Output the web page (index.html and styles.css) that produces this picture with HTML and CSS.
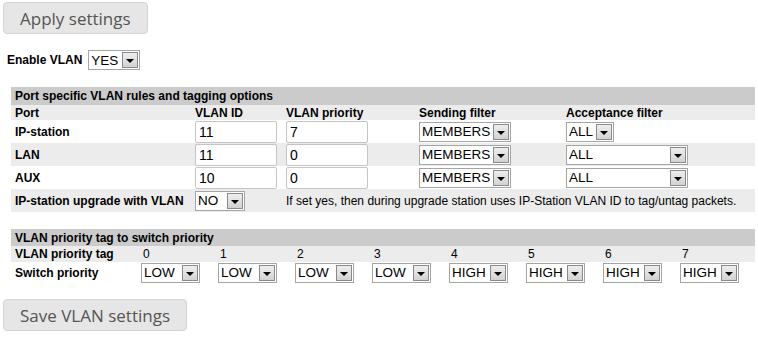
FILE: index.html
```html
<!DOCTYPE html>
<html lang="en">
<head>
    <meta charset="UTF-8">
    <title>VLAN settings</title>
    <link rel="stylesheet" href="styles.css">
</head>
<body>
    <p class="note">Note: the new values apply only after you press the Apply settings button below.</p>
    <button class="btn">Apply settings</button>

    <div class="enable">
        <label>Enable VLAN</label>
        <span class="sel w-yes"><select><option>YES</option><option>NO</option></select></span>
    </div>

    <table class="grid ports">
        <colgroup>
            <col style="width:180px"><col style="width:91px"><col style="width:133px"><col style="width:147px"><col style="width:193px">
        </colgroup>
        <tr class="head"><th colspan="5">Port specific VLAN rules and tagging options</th></tr>
        <tr class="alt sub">
            <th>Port</th><th>VLAN ID</th><th>VLAN priority</th><th>Sending filter</th><th>Acceptance filter</th>
        </tr>
        <tr>
            <th>IP-station</th>
            <td><input type="text" value="11"></td>
            <td><input type="text" value="7"></td>
            <td><span class="sel w-mem"><select><option>MEMBERS</option></select></span></td>
            <td><span class="sel w-all"><select><option>ALL</option></select></span></td>
        </tr>
        <tr class="alt">
            <th>LAN</th>
            <td><input type="text" value="11"></td>
            <td><input type="text" value="0"></td>
            <td><span class="sel w-mem"><select><option>MEMBERS</option></select></span></td>
            <td><span class="sel w-wide"><select><option>ALL</option></select></span></td>
        </tr>
        <tr>
            <th>AUX</th>
            <td><input type="text" value="10"></td>
            <td><input type="text" value="0"></td>
            <td><span class="sel w-mem"><select><option>MEMBERS</option></select></span></td>
            <td><span class="sel w-wide"><select><option>ALL</option></select></span></td>
        </tr>
        <tr class="alt">
            <th>IP-station upgrade with VLAN</th>
            <td><span class="sel w-no"><select><option>NO</option><option>YES</option></select></span></td>
            <td colspan="3" class="hint">If set yes, then during upgrade station uses IP-Station VLAN ID to tag/untag packets.</td>
        </tr>
    </table>

    <table class="grid prio">
        <colgroup>
            <col style="width:128px">
            <col style="width:77px"><col style="width:77px"><col style="width:77px"><col style="width:77px">
            <col style="width:77px"><col style="width:77px"><col style="width:77px"><col style="width:77px">
        </colgroup>
        <tr class="head"><th colspan="9">VLAN priority tag to switch priority</th></tr>
        <tr class="alt tags">
            <th>VLAN priority tag</th>
            <td>0</td><td>1</td><td>2</td><td>3</td><td>4</td><td>5</td><td>6</td><td>7</td>
        </tr>
        <tr class="switch">
            <th>Switch priority</th>
            <td><span class="sel w-pri"><select><option>LOW</option><option>HIGH</option></select></span></td>
            <td><span class="sel w-pri"><select><option>LOW</option><option>HIGH</option></select></span></td>
            <td><span class="sel w-pri"><select><option>LOW</option><option>HIGH</option></select></span></td>
            <td><span class="sel w-pri"><select><option>LOW</option><option>HIGH</option></select></span></td>
            <td><span class="sel w-pri"><select><option>HIGH</option><option>LOW</option></select></span></td>
            <td><span class="sel w-pri"><select><option>HIGH</option><option>LOW</option></select></span></td>
            <td><span class="sel w-pri"><select><option>HIGH</option><option>LOW</option></select></span></td>
            <td><span class="sel w-pri"><select><option>HIGH</option><option>LOW</option></select></span></td>
        </tr>
    </table>

    <button class="btn">Save VLAN settings</button>
</body>
</html>
```

FILE: styles.css
```css
body {
    margin: 0;
    font-family: "Liberation Sans", Arial, sans-serif;
    font-size: 12px;
    color: #000;
    background: #fff;
    overflow: hidden;
}

.note {
    margin: -16px 0 0 8px;
    font-size: 13px;
    line-height: 14px;
}

.btn {
    display: block;
    height: 32px;
    margin: 4px 0 0 3px;
    padding: 0 16px;
    font-family: "Open Sans", sans-serif;
    font-size: 17px;
    color: #555;
    background: #e6e6e6;
    border: 1px solid #d4d4d4;
    border-radius: 4px;
}

.enable {
    display: flex;
    align-items: center;
    gap: 6px;
    height: 20px;
    margin: 16px 0 0 7px;
}
.enable label {
    font-weight: bold;
}

/* tables */
.grid {
    width: 744px;
    margin: 17px 0 0 11px;
    border-collapse: collapse;
    table-layout: fixed;
}
.grid th,
.grid td {
    padding: 0 0 0 4px;
    text-align: left;
    white-space: nowrap;
    vertical-align: middle;
    line-height: 14px;
}
.grid th {
    font-weight: bold;
}
.grid .head th {
    height: 18px;
    background: #cbcbcb;
    font-size: 12px;
}
.grid .alt {
    background: #ececec;
}
.ports tr {
    height: 23px;
}
.ports tr.head {
    height: 18px;
}
.ports tr.sub {
    height: 15px;
}
.ports .sub th {
    height: 15px;
}
.ports .hint {
    font-weight: normal;
}

.prio {
    margin-top: 17px;
}
.prio tr.head th {
    height: 17px;
}
.prio .tags th,
.prio .tags td {
    height: 16px;
}
.prio td {
    padding-left: 2px;
}
.prio .tags td {
    padding-left: 4px;
}
.prio .switch th,
.prio .switch td {
    height: 21px;
}

.prio + .btn {
    margin-top: 16px;
}

/* inputs */
input[type="text"] {
    box-sizing: border-box;
    display: block;
    width: 82px;
    height: 22px;
    margin: 0;
    padding: 0 3px;
    font-family: "Liberation Sans", Arial, sans-serif;
    font-size: 14px;
    color: #000;
    border: 1px solid #c4c4c4;
    border-radius: 2px;
}

/* classic looking select with a small arrow button */
.sel {
    position: relative;
    display: block;
    box-sizing: border-box;
    height: 20px;
    border: 1px solid #a5a5a5;
    background: #fff;
}
.enable .sel {
    display: inline-block;
}
.sel select {
    -webkit-appearance: none;
    appearance: none;
    display: block;
    box-sizing: border-box;
    width: 100%;
    height: 18px;
    margin: 0;
    padding: 0 18px 0 2px;
    border: 0;
    background: transparent;
    font-family: "Liberation Sans", Arial, sans-serif;
    font-size: 13.5px;
    color: #000;
    outline: none;
}
.sel::after {
    content: "";
    position: absolute;
    top: 1px;
    right: 1px;
    width: 14px;
    height: 14px;
    border: 1px solid #8a8a8a;
    background: linear-gradient(#eeeeee, #d2d2d2);
    pointer-events: none;
}
.sel::before {
    content: "";
    position: absolute;
    top: 8px;
    right: 5px;
    width: 0;
    height: 0;
    border-left: 4px solid transparent;
    border-right: 4px solid transparent;
    border-top: 4px solid #000;
    z-index: 1;
    pointer-events: none;
}

.w-yes { width: 52px; }
.w-no { width: 50px; }
.w-mem { width: 92px; }
.w-all { width: 48px; }
.w-wide { width: 122px; }
.w-pri { width: 59px; }
```
